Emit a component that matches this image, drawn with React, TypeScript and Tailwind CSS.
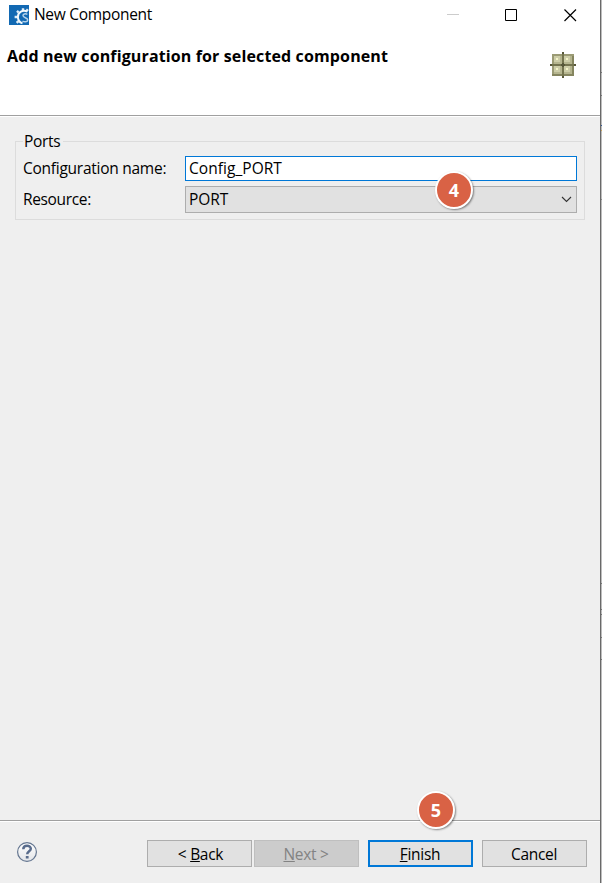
import type { ReactNode } from "react";

function AppIcon() {
  return (
    <svg width="20" height="20" viewBox="0 0 20 20" className="shrink-0">
      <rect width="20" height="20" fill="#1269b3" />
      <path d="M14 5.500V3.200M9.600 7.500L8 5.900M8 12H5.600M9.400 16.200l-1.700 1.700M17.500 6l1.400-1.800" stroke="#dfedf8" strokeWidth="2.400" fill="none" />
      <path d="M18.200 6.600C13.800 4.400 8.900 7.200 8.900 12c0 3 1.700 5.300 4.600 6.400" stroke="#f2f8fc" strokeWidth="2" fill="none" />
      <path d="M18.400 9.300C16.500 8.300 14 8.800 14 10.600c0 2.500 4.700 1.700 4.700 4.300 0 2.200-3.300 2.400-5.200 1.300" stroke="#b4d2ea" strokeWidth="1.500" fill="none" />
    </svg>
  );
}

function GridIcon() {
  return (
    <svg width="26" height="26" viewBox="0 0 26 26" shapeRendering="crispEdges">
      <rect x="2" y="2" width="22" height="22" fill="#9b9b75" />
      <path d="M2 22h22v2H2zM22 4h2v20h-2z" fill="#85855f" />
      {[4, 14].map((y) =>
        [4, 14].map((x) => (
          <g key={`${x}-${y}`}>
            <rect x={x} y={y} width="8" height="8" fill="#b5b58f" />
            <rect x={x} y={y} width="6" height="6" fill="#cdcda8" />
            <rect x={x + 2} y={y + 2} width="2" height="2" fill="#f5f5c8" />
          </g>
        )),
      )}
      <path d="M12 2h2v22h-2zM2 12h22v2H2z" fill="#74744f" />
      <path d="M12 0h2v2h-2zM12 24h2v2h-2zM0 12h2v2H0zM24 12h2v2h-2zM11 12h4v2h-4zM12 11h2v4h-2z" fill="#58583a" />
    </svg>
  );
}

function Button({ className, children }: { className: string; children: ReactNode }) {
  return (
    <button className={`flex h-[27px] w-[105px] items-center justify-center pr-px ${className}`}>
      <span className="whitespace-pre">{children}</span>
    </button>
  );
}

function Badge({ className, children }: { className: string; children: ReactNode }) {
  return (
    <div
      className={`absolute flex size-[38px] items-center justify-center rounded-full border-[2.5px] border-white bg-[#d96245] pb-px font-['Open_Sans',sans-serif] text-[18px] font-bold tracking-normal text-white shadow-[1px_1px_2px_rgba(0,0,0,0.45)] ${className}`}
    >
      {children}
    </div>
  );
}

export default function App() {
  return (
    <div className="relative flex h-[883px] w-[602px] overflow-hidden bg-[#efefef] font-['Open_Sans',sans-serif] text-[15.5px] leading-5 tracking-[-0.3px] text-black">
      <main className="flex w-[600px] flex-col">
        <header className="h-[117px] border-b border-white bg-white">
          <div className="h-[116px] border-b border-[#a0a0a0]">
            <div className="flex h-[30px] items-center pl-[9px]">
              <AppIcon />
              <span className="-mt-0.5 ml-[5px]">New Component</span>
              <svg className="ml-auto mr-[22px]" width="131" height="14" viewBox="0 0 131 14" fill="none">
                <path d="M0 6.500h12" stroke="#ccc" />
                <path d="M58.500 1.500h11v11h-11z" stroke="#000" />
                <path d="M117.500 1.500l11.500 11.500M129 1.500L117.500 13" stroke="#000" strokeWidth="1.200" />
              </svg>
            </div>
            <div className="flex justify-between pl-[7px] pr-[24px]">
              <h1 className="mt-4 text-[16px] font-bold tracking-[0.13px]">Add new configuration for selected component</h1>
              <div className="mt-[22px]"><GridIcon /></div>
            </div>
          </div>
        </header>

        <section className="flex-1 pl-[15px] pr-[15px] pt-[24px]">
          <div className="h-[79px] border border-[#dcdcdc] px-[7px]">
            <div className="-mt-[11px] w-[40px] bg-[#efefef] pl-px">Ports</div>
            <div className="mt-[5px] flex h-[25px]">
              <label className="w-[162px] pt-0.5 tracking-[-0.26px]">Configuration name:</label>
              <div className="h-[25px] w-[392px] border border-[#0078d7] bg-white pl-[3px] pt-px tracking-[0.05px]">Config_PORT</div>
            </div>
            <div className="mt-[5px] flex h-[27px]">
              <label className="w-[162px] pt-[3px] tracking-[-0.35px]">Resource:</label>
              <div className="flex w-[392px] items-center justify-between border border-[#adadad] bg-[#e1e1e1] pl-[3px] pr-1">
                <span className="-mt-px tracking-[-0.1px]">PORT</span>
                <svg width="11" height="7" viewBox="0 0 11 7" fill="none">
                  <path d="M1 1l4.500 4.500L10 1" stroke="#333" strokeWidth="1.100" />
                </svg>
              </div>
            </div>
          </div>
        </section>

        <footer className="h-[63px] border-t border-[#a0a0a0]">
          <div className="flex border-t border-white pt-[18px]">
            <svg className="ml-4 mt-px" width="22" height="22" viewBox="0 0 22 22" fill="none">
              <defs>
                <linearGradient id="help" x1="0" y1="0" x2="0" y2="1">
                  <stop stopColor="#fff" />
                  <stop offset="1" stopColor="#e3e5e8" />
                </linearGradient>
              </defs>
              <circle cx="11" cy="11" r="9.400" fill="url(#help)" stroke="#647690" strokeWidth="1.200" />
              <path d="M7.300 8.200c0-4.700 7.500-4.300 7.500-.5 0 2.500-3.600 2.600-3.600 5.500" stroke="#596c8c" strokeWidth="2.500" />
              <path d="M9.800 15h2.800v2.500H9.800z" fill="#596c8c" />
            </svg>
            <div className="ml-[109px] flex">
              <Button className="border border-[#adadad] bg-[#e1e1e1] pl-[3px]">{"< "}<u>B</u>ack</Button>
              <Button className="ml-0.5 border border-[#bfbfbf] bg-[#ccc] text-[#838383]"><u>N</u>{"ext >"}</Button>
              <Button className="ml-[9px] border-2 border-[#0078d7] bg-[#e1e1e1]"><u>F</u>inish</Button>
              <Button className="ml-[9px] border border-[#adadad] bg-[#e1e1e1]">Cancel</Button>
            </div>
          </div>
        </footer>
      </main>
      <aside className="flex w-0.5 flex-col border-l border-[#696969] bg-[#bdbdbd]">
        <div className="mt-[72px] h-px bg-[#777]" />
        <div className="mt-[22px] h-px bg-[#777]" />
        <div className="mt-[29px] h-px bg-[#335a99]" />
        <div className="mt-1 h-px bg-[#c9a45e]" />
        <div className="mt-[68px] h-px bg-[#8a8a8a]" />
        <div className="mt-[383px] h-px bg-[#777]" />
        <div className="mt-[25px] h-px bg-[#777]" />
        <div className="mt-1 h-px bg-[#777]" />
        <div className="mt-[22px] h-px bg-[#777]" />
        <div className="mt-[21px] h-px bg-[#777]" />
      </aside>
      <Badge className="left-[435px] top-[171px]">4</Badge>
      <Badge className="left-[417px] top-[791px]">5</Badge>
    </div>
  );
}
